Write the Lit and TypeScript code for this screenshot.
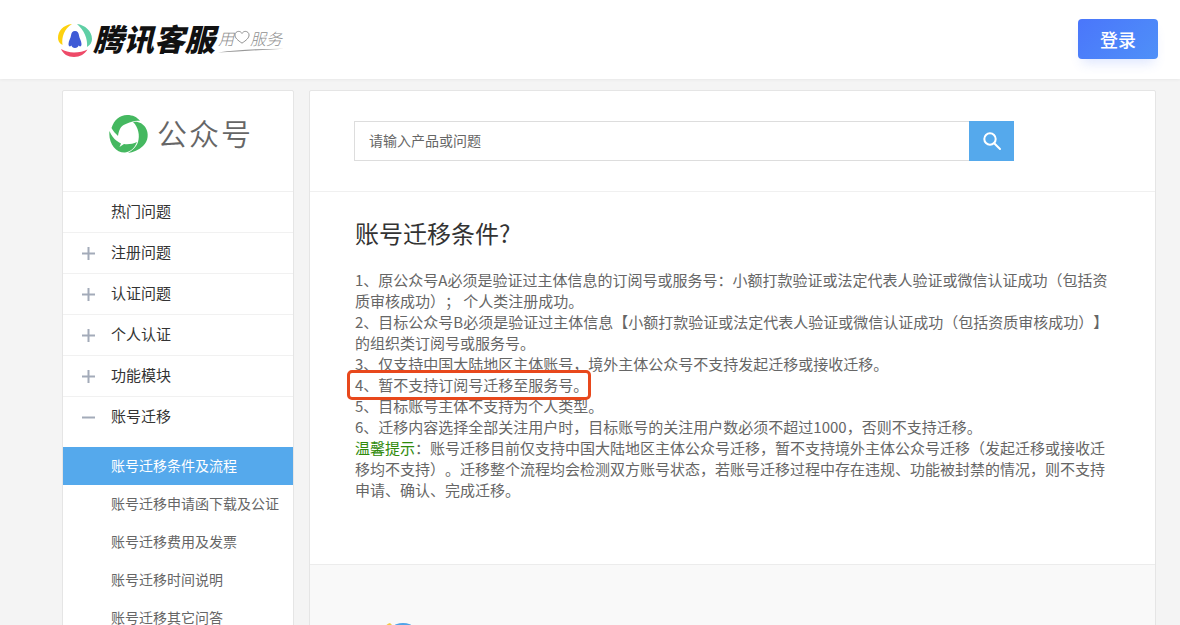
import { LitElement, html, css, svg } from "lit";
import { customElement } from "lit/decorators.js";

const rows = [
  ["", "热门问题"],
  ["plus", "注册问题"],
  ["plus", "认证问题"],
  ["plus", "个人认证"],
  ["plus", "功能模块"],
  ["minus", "账号迁移"],
];
const subs = ["账号迁移条件及流程", "账号迁移申请函下载及公证", "账号迁移费用及发票", "账号迁移时间说明", "账号迁移其它问答"];

@customElement("app-root")
export class AppRoot extends LitElement {
  static styles = css`
    :host {
      display: block;
      width: 1180px;
      height: 625px;
      overflow: hidden;
      background: #f4f4f4;
      font-family: "Noto Sans CJK SC", "Liberation Sans", sans-serif;
      font-size: 14px;
      color: #333;
      text-spacing-trim: space-all;
    }
    header {
      height: 79px;
      background: #fff;
      box-shadow: 0 1px 3px rgba(0, 0, 0, 0.05);
      display: flex;
      align-items: center;
      justify-content: space-between;
      padding: 0 22px 0 57px;
      box-sizing: border-box;
    }
    .brand { display: flex; align-items: center; }
    .brand-name {
      font-size: 30.500px;
      line-height: 36px;
      padding-bottom: 3px;
      font-weight: 900;
      font-style: italic;
      color: #111;
      white-space: nowrap;
    }
    .slogan {
      position: relative;
      margin-left: 3px;
      margin-top: -4px;
      display: flex;
      align-items: center;
      font-size: 16px;
      line-height: 20px;
      font-style: italic;
      color: #8f8f8f;
      font-weight: 300;
      height: 26px;
      width: 66px;
      white-space: nowrap;
    }
    .slogan-line { position: absolute; left: 0; top: 23px; }
    .login {
      width: 80px;
      height: 40px;
      margin-top: -2px;
      border-radius: 4px;
      border: 0;
      color: #fff;
      font: 500 18px/40px "Noto Sans CJK SC", sans-serif;
      background: linear-gradient(135deg, #4a76fb, #4f90f8);
      box-shadow: 0 8px 12px -4px rgba(74, 118, 251, 0.18);
      padding: 0;
    }
    .page {
      display: flex;
      gap: 15px;
      padding: 11px 24px 0 62px;
      align-items: flex-start;
    }
    aside {
      width: 232px;
      box-sizing: border-box;
      background: #fff;
      border: 1px solid #e5e5e5;
      border-radius: 2px;
      flex: none;
    }
    .pub {
      height: 86px;
      padding: 0 0 14px 46px;
      display: flex;
      align-items: center;
      gap: 8px;
      font-size: 30px;
      letter-spacing: 2px;
      color: #666;
      font-weight: 350;
      border-bottom: 1px solid #f0f0f0;
    }
    .pub span { margin-top: -5px; }
    .row {
      height: 36px;
      padding: 0 0 4px 48px;
      border-bottom: 1px solid #f1f1f1;
      display: flex;
      align-items: center;
      position: relative;
      font-size: 15px;
      color: #333;
    }
    .row.last { border-bottom: 0; margin-bottom: 10px; }
    .mark { position: absolute; left: 18.500px; top: 14px; }
    .sub {
      height: 36px;
      line-height: 36px;
      padding: 0 0 2px 48px;
      color: #666;
      white-space: nowrap;
    }
    .sub.active { background: #55a9ec; color: #fff; }
    main {
      width: 847px;
      box-sizing: border-box;
      background: #fff;
      border: 1px solid #e5e5e5;
      border-radius: 2px;
      flex: none;
    }
    .search {
      height: 100px;
      padding: 0 44px;
      display: flex;
      align-items: center;
      border-bottom: 1px solid #f0f0f0;
    }
    .input {
      width: 615px;
      height: 40px;
      box-sizing: border-box;
      border: 1px solid #ddd;
      border-right: 0;
      padding-left: 14px;
      line-height: 36px;
      color: #666;
    }
    .go {
      width: 45px;
      height: 40px;
      background: #55a9ec;
      display: flex;
      align-items: center;
      justify-content: center;
    }
    .article {
      padding: 23px 44px 0 45px;
      height: 373px;
      box-sizing: border-box;
      border-bottom: 1px solid #ececec;
    }
    h1 {
      margin: 0 0 18px;
      font-size: 24px;
      line-height: 36px;
      font-weight: 400;
      color: #333;
    }
    .body { font-size: 15px; line-height: 21px; color: #666; width: 760px; }
    .body div { white-space: nowrap; }
    .hl { position: relative; }
    .box {
      position: absolute;
      left: -8px;
      top: -4px;
      width: 244px;
      height: 30px;
      box-sizing: border-box;
      border: 3px solid #e8481c;
      border-radius: 5px;
    }
    .tip { color: #2f8a0a; }
    .foot { height: 100px; background: #f9f9f9; padding: 56px 0 0 75px; box-sizing: border-box; }
  `;

  private qqLogo() {
    return html`<svg width="36" height="36" viewBox="0 0 36 36" style="flex:none">
      <path d="M15 2C6 3 1 9 1 16C1 18.500 2 21 5.500 23C4.500 15 7 7 15 2Z" fill="#fdd10e"/>
      <path d="M20 2C28 3 35 9 35 17C35 20 33.500 23 30 25C31 17 27 8 20 2Z" fill="#5fcfa5"/>
      <path d="M4 27C8 29 12 30.500 17 30.500C22 30.500 27 29.500 30.500 27.500C28 32 23 35 17 35C11 35 6 32 4 27Z" fill="#ee4a68"/>
      <path d="M18 9C15.500 9 14.200 11 14 13.500C13.800 16 11.500 19 11.500 22C11.500 23.500 12 24.500 13 24.500L14.500 23.500C14.800 25 16 26 18 26C20 26 21.200 25 21.500 23.500L23 24.500C24 24.500 24.500 23.500 24.500 22C24.500 19 22.200 16 22 13.500C21.800 11 20.500 9 18 9Z" fill="#3f5bd6"/>
    </svg>`;
  }

  private wxLogo() {
    return html`<svg width="40" height="42" viewBox="0 -1 40 42" fill="#45b860" style="flex:none">
      <path d="M2.500 14C5 6 11 1 18 1C24 1 28 3 31 7C26 6 22 8 18 9.500C13 11 10 14 9 22C7 20 4 17 2.500 14Z"/>
      <path d="M.5 17C2 21 5 25 8 27C9.500 28 11 29 12 29.500L10.500 33L15 30C19 30.500 24 30 28 28C26 33 22 38 16 38.500C7 39 -1 29 .5 17Z"/>
      <path d="M24 8C29 7 34 9.500 36.500 13.500C40 19 39.500 27 34 32C30 36 24 38.500 19 39C23 36.500 27.500 33 29 28C31 22 29.500 13 24 8Z"/>
    </svg>`;
  }

  private mark(kind: string) {
    if (!kind) return "";
    return html`<svg class="mark" width="13" height="13" viewBox="0 0 13 13">
      ${svg`<rect x="0" y="5.500" width="13" height="2" fill="#a3abb9"/>`}
      ${kind === "plus" ? svg`<rect x="5.500" y="0" width="2" height="13" fill="#a3abb9"/>` : ""}
    </svg>`;
  }

  render() {
    return html`
      <header>
        <div class="brand">
          ${this.qqLogo()}
          <span class="brand-name">腾讯客服</span>
          <span class="slogan">用<svg width="16" height="15" viewBox="0 0 17 15" fill="none"><path d="M8.500 13.500C4 10.500 1 8 1 4.800C1 2.500 3 1 5 1C6.500 1 7.800 2 8.500 3.200C9.200 2 10.500 1 12 1C14 1 16 2.500 16 4.800C16 8 13 10.500 8.500 13.500Z" stroke="#8a8a8a" stroke-width="1"/></svg>服务<svg class="slogan-line" width="66" height="5" viewBox="0 0 68 5"><path d="M0 4.500C20 1.500 45 .8 68 .6L20 3.500Z" fill="#999"/></svg></span>
        </div>
        <button class="login">登录</button>
      </header>
      <div class="page">
        <aside>
          <div class="pub">${this.wxLogo()}<span>公众号</span></div>
          ${rows.map(([k, t], i) => html`<div class="row ${i === rows.length - 1 ? "last" : ""}">${this.mark(k)}${t}</div>`)}
          ${subs.map((t, i) => html`<div class="sub ${i === 0 ? "active" : ""}">${t}</div>`)}
        </aside>
        <main>
          <div class="search">
            <div class="input">请输入产品或问题</div>
            <div class="go">
              <svg width="20" height="20" viewBox="0 0 20 20" fill="none" stroke="#fff" stroke-width="2"><circle cx="8" cy="8" r="5.700"/><path d="M12.200 12.200L18 18" stroke-linecap="round"/></svg>
            </div>
          </div>
          <div class="article">
            <h1>账号迁移条件?</h1>
            <div class="body">
              <div>1、原公众号A必须是验证过主体信息的订阅号或服务号：小额打款验证或法定代表人验证或微信认证成功（包括资</div>
              <div>质审核成功）； 个人类注册成功。</div>
              <div>2、目标公众号B必须是验证过主体信息【小额打款验证或法定代表人验证或微信认证成功（包括资质审核成功）】</div>
              <div>的组织类订阅号或服务号。</div>
              <div>3、仅支持中国大陆地区主体账号，境外主体公众号不支持发起迁移或接收迁移。</div>
              <div class="hl">4、暂不支持订阅号迁移至服务号。<span class="box"></span></div>
              <div>5、目标账号主体不支持为个人类型。</div>
              <div>6、迁移内容选择全部关注用户时，目标账号的关注用户数必须不超过1000，否则不支持迁移。</div>
              <div><span class="tip">温馨提示</span>：账号迁移目前仅支持中国大陆地区主体公众号迁移，暂不支持境外主体公众号迁移（发起迁移或接收迁</div>
              <div>移均不支持）。迁移整个流程均会检测双方账号状态，若账号迁移过程中存在违规、功能被封禁的情况，则不支持</div>
              <div>申请、确认、完成迁移。</div>
            </div>
          </div>
          <div class="foot">
            <svg width="36" height="40" viewBox="0 0 36 40"><circle cx="18" cy="20" r="18" fill="#4fa3e8"/><path d="M0 6A8 8 0 0 1 5 2L8 5Z" fill="#f6c945"/></svg>
          </div>
        </main>
      </div>
    `;
  }
}
